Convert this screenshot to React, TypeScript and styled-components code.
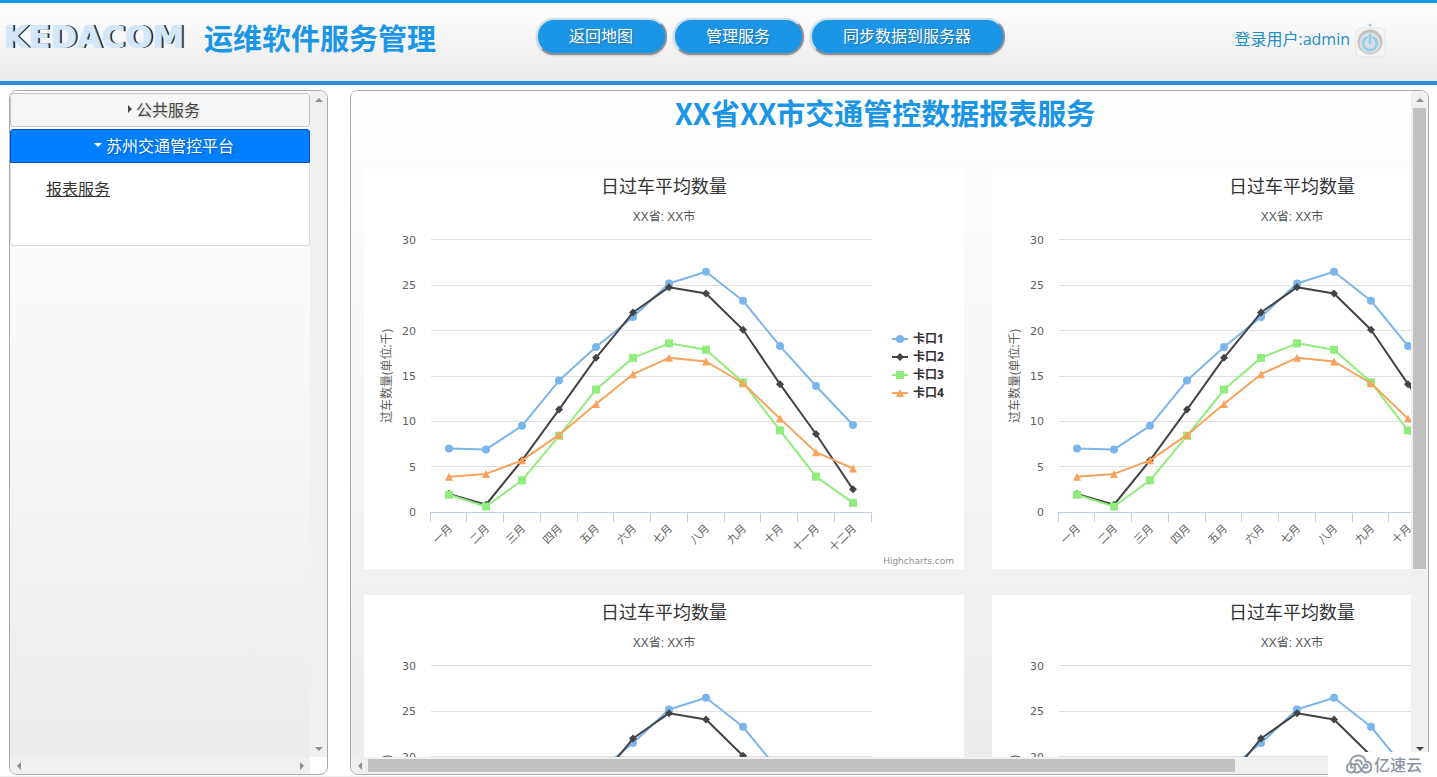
import React from "react";
import styled, { createGlobalStyle } from "styled-components";

const blue = "#1b95e6";
const cjk = `"Open Sans", "Noto Sans CJK SC", sans-serif`;
const chartFont = `"DejaVu Sans", "Noto Sans CJK SC", sans-serif`;
const subtitleFont = `"Liberation Sans", "Noto Sans CJK SC", sans-serif`;

const GlobalStyle = createGlobalStyle`
  *, *::before, *::after { box-sizing: border-box; }
  html, body, #root { height: 100%; }
  body { margin: 0; background: #fff; font-family: ${cjk}; font-size: 16px; color: #333; }
  h1, h2 { margin: 0; }
`;

const Page = styled.div`
  display: flex;
  flex-direction: column;
  height: 100%;
  border-bottom: 1px solid #eee;
  overflow: hidden;
`;

const Header = styled.header`
  display: grid;
  grid-template-columns: 536px auto 1fr;
  align-items: center;
  height: 85px;
  flex: none;
  padding: 0 51px 10px 0;
  border-top: 3px solid ${blue};
  border-bottom: 4px solid #2a8fdb;
  background: linear-gradient(#fff, #eaeaea);
`;

const Brand = styled.div`
  display: flex;
  align-items: center;
  gap: 20px;
  padding-left: 4px;
`;

const Logo = styled.span`
  width: 180px;
  font: bold 32px/36px "DejaVu Sans", sans-serif;
  color: #d2e7fa;
  text-shadow: -1px 0 0 #d2e7fa, 1px 0 0 #5a6670, 2px 0 0 #111;
`;

const SystemName = styled.h1`
  font: bold 29px/40px "Noto Sans CJK SC", sans-serif;
  color: ${blue};
  white-space: nowrap;
`;

const Nav = styled.nav`
  display: flex;
  gap: 5px;
  padding-bottom: 2px;
`;

const NavButton = styled.button`
  height: 37px;
  padding: 0 32px 2px 31px;
  border: 2px solid;
  border-color: #c9dfee #8b8f94 #8b8f94 #c9dfee;
  border-radius: 18px;
  background: ${blue};
  box-shadow: 0 1px 2px #ccc;
  color: #fff;
  font: 16px/20px "Noto Sans CJK SC", sans-serif;
  text-shadow: 1px 1px 1px #2673a8;
  white-space: nowrap;

  & + & {
    margin-left: 1px;
  }
`;

const User = styled.div`
  display: flex;
  align-items: center;
  justify-content: flex-end;
  gap: 5px;
  padding-top: 4px;
  color: #1f8fc4;
  font: 16px/24px ${cjk};
  white-space: nowrap;
`;

const PowerButton = styled.button`
  display: block;
  width: 31px;
  height: 38px;
  padding: 0;
  border: 0;
  background: none;
`;

const Main = styled.main`
  flex: 1;
  min-height: 0;
  display: grid;
  grid-template-columns: 319px minmax(0, 1fr);
  gap: 22px;
  padding: 5px 8px 1px 9px;
`;

const Panel = styled.section`
  display: grid;
  grid-template-columns: minmax(0, 1fr) 17px;
  grid-template-rows: minmax(0, 1fr) 17px;
  min-width: 0;
  min-height: 0;
  overflow: hidden;
  border: 1px solid #aaa;
  border-radius: 8px;
`;

const Viewport = styled.div<{ $pad: string }>`
  overflow: hidden;
  padding: ${(p) => p.$pad};
  background: linear-gradient(#fff, #ececec);
`;

const Bar = styled.div<{ $vertical?: boolean }>`
  display: flex;
  flex-direction: ${(p) => (p.$vertical ? "column" : "row")};
  background: #f0f0f0;
`;

const BarEnd = styled.span`
  display: flex;
  align-items: center;
  justify-content: center;
  width: 17px;
  height: 17px;
  flex: none;
`;

const Track = styled.div<{ $vertical?: boolean }>`
  flex: 1;
  display: flex;
  flex-direction: ${(p) => (p.$vertical ? "column" : "row")};
  padding: ${(p) => (p.$vertical ? "0 2px" : "2px 0")};
`;

const Thumb = styled.div<{ $share: string }>`
  flex: 0 0 ${(p) => p.$share};
  background: #c1c1c1;
`;

const AccordionHead = styled.button<{ $open?: boolean }>`
  display: flex;
  align-items: center;
  justify-content: center;
  gap: 4px;
  width: 100%;
  height: 34px;
  margin-bottom: ${(p) => (p.$open ? "0" : "2px")};
  padding: 0 0 2px 8px;
  border: 1px solid ${(p) => (p.$open ? "#0450d0" : "#c5c5c5")};
  border-radius: ${(p) => (p.$open ? "3px 3px 0 0" : "3px")};
  background: ${(p) => (p.$open ? "#007fff" : "#f6f6f6")};
  color: ${(p) => (p.$open ? "#fff" : "#454545")};
  font: 16px/24px "Noto Sans CJK SC", sans-serif;
  text-shadow: 1px 1px 2px ${(p) => (p.$open ? "#0058b8" : "#ccc")};
`;

const AccordionBody = styled.div`
  height: 83px;
  padding: 13px 35px;
  border: 1px solid #ddd;
  border-top: 0;
  border-radius: 0 0 3px 3px;
  background: #fff;
`;

const ServiceLink = styled.a`
  color: #333;
  font: 16px/24px "KaiTi", "STKaiti", "Noto Sans CJK SC", sans-serif;
  text-decoration: underline;
`;

const ReportTitle = styled.h2`
  margin-bottom: 38px;
  color: ${blue};
  font: bold 29px/38px "Noto Sans CJK SC", sans-serif;
  text-align: center;
  white-space: nowrap;
`;

const ChartGrid = styled.div`
  display: grid;
  grid-template-columns: 600px 600px;
  gap: 26px 28px;
`;

const ChartSvg = styled.svg`
  display: block;
  background: #fff;
  font-family: ${chartFont};
`;

const Watermark = styled.div`
  position: absolute;
  right: 0;
  bottom: 0;
  display: flex;
  align-items: center;
  gap: 2px;
  width: 109px;
  height: 25px;
  padding: 0 0 1px 18px;
  background: #fff;
  color: #8b92a0;
  font: 500 16px/24px "Noto Sans CJK SC", sans-serif;
  white-space: nowrap;
`;

const arrows = {
  up: "0,4 4,0 8,4",
  down: "0,0 8,0 4,4",
  left: "4,0 4,8 0,4",
  right: "0,0 4,4 0,8",
};

function Arrow({ dir, color = "#8f8f8f" }: { dir: keyof typeof arrows; color?: string }) {
  const flat = dir === "up" || dir === "down";
  return (
    <svg width={flat ? 8 : 4} height={flat ? 4 : 8} aria-hidden="true">
      <polygon points={arrows[dir]} fill={color} />
    </svg>
  );
}

function ScrollBar({ vertical, share }: { vertical?: boolean; share?: string }) {
  return (
    <Bar $vertical={vertical}>
      <BarEnd><Arrow dir={vertical ? "up" : "left"} /></BarEnd>
      <Track $vertical={vertical}>{share && <Thumb $share={share} />}</Track>
      <BarEnd><Arrow dir={vertical ? "down" : "right"} color={vertical && share ? "#444" : "#8f8f8f"} /></BarEnd>
    </Bar>
  );
}

const months = ["一月", "二月", "三月", "四月", "五月", "六月", "七月", "八月", "九月", "十月", "十一月", "十二月"];

type Shape = "circle" | "diamond" | "square" | "triangle";

const series: { name: string; color: string; shape: Shape; data: number[] }[] = [
  { name: "卡口1", color: "#7cb5ec", shape: "circle", data: [7, 6.9, 9.5, 14.5, 18.2, 21.5, 25.2, 26.5, 23.3, 18.3, 13.9, 9.6] },
  { name: "卡口2", color: "#434348", shape: "diamond", data: [2, 0.8, 5.7, 11.3, 17, 22, 24.8, 24.1, 20.1, 14.1, 8.6, 2.5] },
  { name: "卡口3", color: "#90ed7d", shape: "square", data: [1.9, 0.6, 3.5, 8.4, 13.5, 17, 18.6, 17.9, 14.3, 9, 3.9, 1] },
  { name: "卡口4", color: "#f7a35c", shape: "triangle", data: [3.9, 4.2, 5.7, 8.5, 11.9, 15.2, 17, 16.6, 14.2, 10.3, 6.6, 4.8] },
];

const plot = { left: 67, right: 508, top: 71, bottom: 343 };
const step = (plot.right - plot.left) / months.length;
const xAt = (i: number) => Math.floor(plot.left + step * (i + 0.5));
const yAt = (v: number) => plot.bottom - (v * (plot.bottom - plot.top)) / 30;
const crisp = (n: number) => Math.floor(n) + 0.5;

function Marker({ shape, x, y, color }: { shape: Shape; x: number; y: number; color: string }) {
  if (shape === "circle") return <circle cx={x} cy={y} r={4} fill={color} />;
  if (shape === "square") return <rect x={x - 4} y={y - 4} width={8} height={8} fill={color} />;
  const points =
    shape === "diamond"
      ? `${x},${y - 4} ${x + 4},${y} ${x},${y + 4} ${x - 4},${y}`
      : `${x},${y - 4} ${x + 4},${y + 4} ${x - 4},${y + 4}`;
  return <polygon points={points} fill={color} />;
}

function TrafficChart() {
  return (
    <ChartSvg width="600" height="400" role="img" aria-label="日过车平均数量">
      <text x="300" y="24" textAnchor="middle" fontSize="18" fill="#333">日过车平均数量</text>
      <text x="300" y="52" textAnchor="middle" fontSize="12" fill="#555" fontFamily={subtitleFont}>XX省: XX市</text>
      {[0, 5, 10, 15, 20, 25, 30].map((v) => (
        <g key={v}>
          <line x1={plot.left} x2={plot.right} y1={crisp(yAt(v) - (v === 30 ? 1 : 0))} y2={crisp(yAt(v) - (v === 30 ? 1 : 0))} stroke={v ? "#e0e0e0" : "#c0d0e0"} />
          <text x="52" y={Math.round(yAt(v)) + 4} textAnchor="end" fontSize="11" fill="#606060">{v}</text>
        </g>
      ))}
      {Array.from({ length: months.length + 1 }, (_, i) => (
        <line key={i} x1={crisp(plot.left + step * i - 1)} x2={crisp(plot.left + step * i - 1)} y1={plot.bottom} y2={plot.bottom + 10} stroke="#c0d0e0" />
      ))}
      {months.map((m, i) => {
        const x = xAt(i) + 4;
        return (
          <text key={m} x={x} y="360" textAnchor="end" fontSize="11" fill="#606060" transform={`rotate(-45 ${x} 360)`}>{m}</text>
        );
      })}
      <text x="27" y="207" textAnchor="middle" fontSize="12" fill="#606060" fontFamily={cjk} transform="rotate(-90 27 207)">过车数量(单位:千)</text>
      {series.map((s) => (
        <g key={s.name}>
          <polyline points={s.data.map((v, i) => `${xAt(i)},${yAt(v)}`).join(" ")} fill="none" stroke={s.color} strokeWidth="2" strokeLinejoin="round" />
          {s.data.map((v, i) => (
            <Marker key={i} shape={s.shape} x={xAt(i)} y={yAt(v)} color={s.color} />
          ))}
        </g>
      ))}
      {series.map((s, i) => (
        <g key={s.name}>
          <line x1="528" x2="544" y1={170 + i * 18} y2={170 + i * 18} stroke={s.color} strokeWidth="2" />
          <Marker shape={s.shape} x={536} y={170 + i * 18} color={s.color} />
          <text x="549" y={174 + i * 18} fontSize="12" fontWeight="bold" fill="#333" fontFamily={cjk}>{s.name}</text>
        </g>
      ))}
      <text x="590" y="395" textAnchor="end" fontSize="9" fill="#909090">Highcharts.com</text>
    </ChartSvg>
  );
}

function PowerIcon() {
  return (
    <svg width="31" height="38" viewBox="0 0 31 38" aria-hidden="true">
      <rect x="1" y="8" width="29" height="29" rx="5" fill="#f4f4f4" stroke="#e6e6e6" />
      <circle cx="15" cy="5" r="1.5" fill="#9fc9e4" />
      <circle cx="15" cy="22" r="12.5" fill="#c2c2c2" />
      <circle cx="15" cy="23" r="10.5" fill="#dcdfe2" />
      <path d="M11.500 17.500a6.800 6.800 0 1 0 7 0" fill="none" stroke="#8fcdf0" strokeWidth="2.6" strokeLinecap="round" />
      <path d="M15 15v8" stroke="#8fcdf0" strokeWidth="2.6" strokeLinecap="round" />
    </svg>
  );
}

function CloudLogo() {
  return (
    <svg width="26" height="20" viewBox="0 0 26 20" fill="none" stroke="#9298a6" strokeWidth="1.9" strokeLinecap="round" aria-hidden="true">
      <path d="M6.800 13.800a1.900 1.900 0 1 1 1.600-2.800c1.400 2.600 1 7.500-3.200 7.500a4.600 4.600 0 0 1-.8-9.100" />
      <path d="M4.400 9.400C4 5 7.500 1.500 12 1.500c4 0 7 2.300 7.600 6a5.500 5.500 0 0 1 .8 11c-4.400 0-5.400-3-7-6-1.200-2.300-2.600-3.600-4.600-2" />
      <path d="M9.500 6.800c3.500-1.600 6 .2 6.500 3.200" />
      <path d="M18.800 13.800a1.900 1.900 0 1 0-.6-2.600c-1.500 2.600-3 7.300-7.200 7.300-1.300 0-2.300-.3-3-.8" />
    </svg>
  );
}

export default function App() {
  return (
    <Page>
      <GlobalStyle />
      <Header>
        <Brand>
          <Logo>KEDACOM</Logo>
          <SystemName>运维软件服务管理</SystemName>
        </Brand>
        <Nav>
          <NavButton>返回地图</NavButton>
          <NavButton>管理服务</NavButton>
          <NavButton>同步数据到服务器</NavButton>
        </Nav>
        <User>
          <span>登录用户:admin</span>
          <PowerButton aria-label="退出"><PowerIcon /></PowerButton>
        </User>
      </Header>
      <Main>
        <Panel>
          <Viewport $pad="2px 0 0">
            <AccordionHead aria-expanded="false">
              <Arrow dir="right" color="#454545" />
              公共服务
            </AccordionHead>
            <AccordionHead $open aria-expanded="true">
              <Arrow dir="down" color="#fff" />
              苏州交通管控平台
            </AccordionHead>
            <AccordionBody>
              <ServiceLink href="#report">报表服务</ServiceLink>
            </AccordionBody>
          </Viewport>
          <ScrollBar vertical />
          <ScrollBar />
        </Panel>
        <Panel>
          <Viewport $pad="2px 5px 0 13px">
            <ReportTitle>XX省XX市交通管控数据报表服务</ReportTitle>
            <ChartGrid>
              <TrafficChart />
              <TrafficChart />
              <TrafficChart />
              <TrafficChart />
            </ChartGrid>
          </Viewport>
          <ScrollBar vertical share="73%" />
          <ScrollBar share="84.5%" />
        </Panel>
      </Main>
      <Watermark>
        <CloudLogo />
        亿速云
      </Watermark>
    </Page>
  );
}
